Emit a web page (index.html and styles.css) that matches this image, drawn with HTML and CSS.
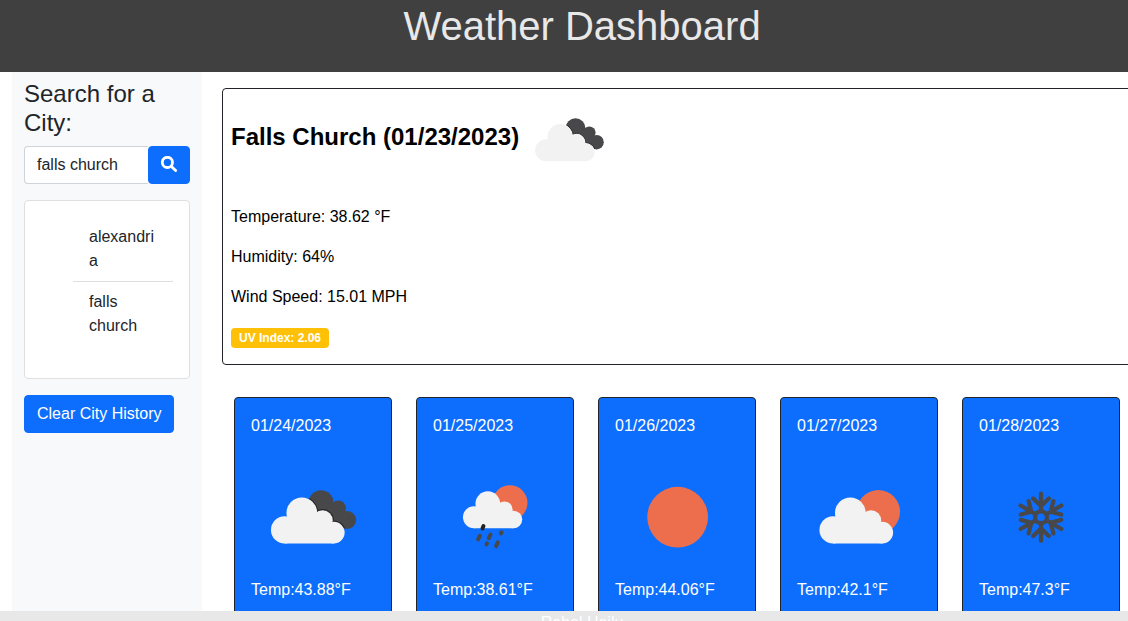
FILE: index.html
```
<!DOCTYPE html>
<html lang="en">
<head>
<meta charset="utf-8">
<meta name="viewport" content="width=device-width, initial-scale=1">
<title>Weather Dashboard</title>
<link rel="stylesheet" href="styles.css">
</head>
<body>
<svg class="sprite" aria-hidden="true">
  <defs>
    <g id="cloud-shape">
      <circle cx="27.1" cy="60.2" r="11"/>
      <circle cx="41" cy="46.5" r="12.4"/>
      <circle cx="57.7" cy="52.5" r="8.2"/>
      <circle cx="66.7" cy="62.4" r="8.8"/>
      <path d="M27 57L41 46L58 54L67 60V71.2H27Z"/>
    </g>
    <g id="dark-shape">
      <circle cx="56.5" cy="38.2" r="10"/>
      <circle cx="70.4" cy="42.6" r="6.2"/>
      <circle cx="77.6" cy="52.2" r="7.2"/>
      <path d="M52 40L70 40L79 50L72 57L56 52Z"/>
    </g>
    <clipPath id="dark-clip">
      <circle cx="56.5" cy="38.2" r="10"/>
      <circle cx="70.4" cy="42.6" r="6.2"/>
      <circle cx="77.6" cy="52.2" r="7.2"/>
      <path d="M52 40L70 40L79 50L72 57L56 52Z"/>
    </clipPath>
    <g id="snow-arm">
      <path d="M50 44.5V31M50 41L43.7 34.8M50 41L56.3 34.8"/>
    </g>
  </defs>
</svg>
<div class="page">
  <header class="header"><h1>Weather Dashboard</h1></header>
  <main class="main">
    <aside class="sidebar">
      <h2 class="search-title"><label for="city">Search for a City:</label></h2>
      <form class="search">
        <input class="search-input" id="city" type="text" value="falls church">
        <button class="btn search-btn" type="button" aria-label="Search">
          <svg class="search-icon" viewBox="0 0 16 16"><circle cx="6.4" cy="6.4" r="5.1"/><path d="M10.4 10.4L14.6 14.6"/></svg>
        </button>
      </form>
      <div class="history">
        <ul class="history-list"><li>alexandria</li><li>falls church</li></ul>
      </div>
      <button class="btn clear-btn" type="button">Clear City History</button>
    </aside>
    <div class="content">
      <section class="current">
        <div class="current-head">
          <h3>Falls Church (01/23/2023)</h3>
          <svg class="current-icon" viewBox="0 0 100 100">
            <use href="#dark-shape" class="dark"/>
            <g clip-path="url(#dark-clip)"><use href="#cloud-shape" class="shade"/></g>
            <use href="#cloud-shape" class="halo"/>
            <use href="#cloud-shape" class="light"/>
          </svg>
        </div>
        <p>Temperature: 38.62 °F</p>
        <p>Humidity: 64%</p>
        <p>Wind Speed: 15.01 MPH</p>
        <span class="badge">UV Index: 2.06</span>
      </section>
      <section class="forecast">
        <article class="day">
          <p class="date">01/24/2023</p>
          <svg class="day-icon" viewBox="0 -1 100 100">
            <use href="#dark-shape" class="dark"/>
            <g clip-path="url(#dark-clip)"><use href="#cloud-shape" class="shade"/></g>
            <use href="#cloud-shape" class="light"/>
          </svg>
          <p>Temp:43.88°F</p>
        </article>
        <article class="day">
          <p class="date">01/25/2023</p>
          <svg class="day-icon" viewBox="0 -1 100 100">
            <circle class="sun" cx="62" cy="38.4" r="14.2"/>
            <use href="#cloud-shape" class="light" transform="translate(11.2 1.6) scale(.805)"/>
            <path class="drops" d="M36.4 67.9L37.8 64.9M45 66.9L46.4 63.9M54.8 63.1L55.3 62.1M43.1 72L43.5 71M50.9 73.3L52.3 70.3"/>
            <path class="drops drop-front" d="M39.9 59.1L40.7 57.1"/>
          </svg>
          <p>Temp:38.61°F</p>
        </article>
        <article class="day">
          <p class="date">01/26/2023</p>
          <svg class="day-icon" viewBox="0 -1 100 100"><circle class="sun" cx="50.5" cy="50" r="24.5"/></svg>
          <p>Temp:44.06°F</p>
        </article>
        <article class="day">
          <p class="date">01/27/2023</p>
          <svg class="day-icon" viewBox="0 -1 100 100">
            <circle class="sun" cx="65.6" cy="45.6" r="17.5"/>
            <use href="#cloud-shape" class="light" transform="translate(2 0)"/>
          </svg>
          <p>Temp:42.1°F</p>
        </article>
        <article class="day">
          <p class="date">01/28/2023</p>
          <svg class="day-icon" viewBox="0 -1 100 100">
            <g class="snow">
              <circle cx="50" cy="50" r="4.8"/>
              <use href="#snow-arm"/>
              <use href="#snow-arm" transform="rotate(60 50 50)"/>
              <use href="#snow-arm" transform="rotate(120 50 50)"/>
              <use href="#snow-arm" transform="rotate(180 50 50)"/>
              <use href="#snow-arm" transform="rotate(240 50 50)"/>
              <use href="#snow-arm" transform="rotate(300 50 50)"/>
            </g>
          </svg>
          <p>Temp:47.3°F</p>
        </article>
      </section>
    </div>
  </main>
  <footer class="footer">Rahel Hailu</footer>
</div>
</body>
</html>
```
FILE: styles.css
```
* { box-sizing: border-box; }

body {
  margin: 0;
  overflow: hidden;
  background: #fff;
  color: #212529;
  font: 16px/24px "Liberation Sans", Arial, sans-serif;
}

h1, h2, h3, p, ul { margin: 0; }

.sprite { position: absolute; width: 0; height: 0; }

/* The grid runs slightly wider than the viewport. */
.page {
  display: flex;
  flex-direction: column;
  width: calc(100% + 36px);
  height: 100vh;
}

.header {
  flex: none;
  padding: 2px 0 22px;
  background: #404040;
  color: #e8e8e8;
  text-align: center;
}

.header h1 { font-size: 40px; line-height: 48px; font-weight: 400; }

.main {
  display: flex;
  flex: 1;
  min-height: 0;
  padding: 0 12px;
  overflow: hidden;
}

.sidebar {
  flex: none;
  width: 16.6667%;
  padding: 7px 12px;
  background: #f8f9fa;
}

.search-title {
  margin-bottom: 9px;
  font-size: 24px;
  line-height: 29px;
  font-weight: 400;
}

.search { display: flex; margin-bottom: 16px; }

.search-input {
  flex: 1;
  min-width: 0;
  height: 38px;
  padding: 6px 12px;
  border: 1px solid #ced4da;
  border-right: 0;
  border-radius: 4px 0 0 4px;
  background: #fff;
  color: #212529;
  font: inherit;
}

.btn {
  height: 38px;
  padding: 6px 12px;
  border: 1px solid #0d6efd;
  border-radius: 4px;
  background: #0d6efd;
  color: #fff;
  font: inherit;
}

.search-btn { display: flex; align-items: flex-start; }

.search-icon {
  width: 16px;
  height: 16px;
  margin: 3px 0;
  fill: none;
  stroke: #fff;
  stroke-width: 2.8;
  stroke-linecap: round;
}

.history {
  margin-bottom: 16px;
  padding: 16px 16px 32px;
  border: 1px solid #dfdfdf;
  border-radius: 4px;
  background: #fff;
}

.history-list { padding: 0 0 0 32px; list-style: none; }
.history-list li { padding: 8px 16px; overflow-wrap: anywhere; }
.history-list li + li { border-top: 1px solid #dfdfdf; }

.content { flex: 1; min-width: 0; padding: 16px 20px 0; }

.current {
  margin-bottom: 32px;
  padding: 1px 8px 16px;
  border: 1px solid #212529;
  border-radius: 4px;
  color: #000;
}

.current-head { display: flex; align-items: center; margin-bottom: 15px; }
.current-head h3 { font-size: 24px; line-height: 29px; padding-bottom: 8px; }
.current-icon { width: 100px; height: 100px; }
.current p { margin-bottom: 16px; }

.badge {
  display: block;
  width: fit-content;
  margin-top: 19px;
  padding: 4px 8px;
  border-radius: 4px;
  background: #ffc107;
  color: #fff;
  font-size: 12px;
  line-height: 12px;
  font-weight: 700;
}

.forecast { display: grid; grid-template-columns: repeat(5, 1fr); }

.day {
  min-height: 300px;
  margin: 0 12px;
  padding: 16px;
  border: 1px solid #212529;
  border-radius: 4px;
  background: #0d6efd;
  color: #fff;
}

.date { margin-bottom: 16px; }
.day-icon { display: block; width: 100%; aspect-ratio: 1; }

.dark { fill: #48484a; }
.light { fill: #f2f2f2; }
.shade { fill: #29292b; stroke: #29292b; stroke-width: 2; }
.halo { fill: #fff; stroke: #fff; stroke-width: 1; }
.sun { fill: #ec6e4c; }
.drops { stroke: #48484a; stroke-width: 3.2; stroke-linecap: round; }
.drop-front { stroke: #222; }
.snow { fill: none; stroke: #48484a; stroke-width: 3.4; stroke-linecap: round; }

.footer {
  flex: none;
  height: 10px;
  overflow: hidden;
  background: #e8e8e8;
  color: #fff;
  text-align: center;
}
```
